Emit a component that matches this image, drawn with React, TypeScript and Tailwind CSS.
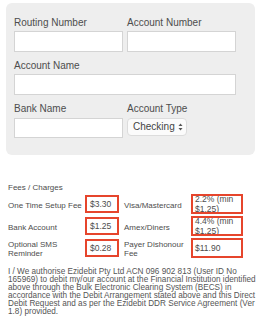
import React from "react";

const feeRows = [
  { label: "One Time Setup Fee", fee: "$3.30", label2: "Visa/Mastercard", fee2: "2.2% (min $1.25)" },
  { label: "Bank Account", fee: "$1.25", label2: "Amex/Diners", fee2: "4.4% (min $1.25)" },
  { label: "Optional SMS Reminder", fee: "$0.28", label2: "Payer Dishonour Fee", fee2: "$11.90" },
];

function Field({ label, className = "" }: { label: string; className?: string }) {
  return (
    <div className={className}>
      <div className="text-[10px] leading-[12px] text-[#4d4d4d]">{label}</div>
      <div className="mt-[2px] h-[21px] bg-white border border-[#d4d4d4]" />
    </div>
  );
}

export default function App() {
  return (
    <div className="w-[260px] h-[327px] bg-white overflow-hidden font-['Liberation_Sans',Arial,sans-serif]">
      <div className="pt-[3px] pl-[6px]">
        <div className="w-[249px] bg-[#eeeeee] rounded-[6px] pt-[14px] pb-[17px] pl-[8px]">
          <div className="w-[222px]">
            <div className="flex gap-[4px]">
              <Field label="Routing Number" className="w-[109px]" />
              <Field label="Account Number" className="w-[109px]" />
            </div>
            <Field label="Account Name" className="mt-[8px]" />
            <div className="mt-[8px] flex gap-[4px]">
              <div className="w-[109px]">
                <div className="text-[10px] leading-[12px] text-[#4d4d4d]">Bank Name</div>
                <div className="mt-[3px] h-[20px] bg-white border border-[#d4d4d4]" />
              </div>
              <div className="w-[109px]">
                <div className="text-[10px] leading-[12px] text-[#4d4d4d]">Account Type</div>
                <div className="mt-[3px] w-[60px] h-[18px] rounded-[4px] border border-[#dcdcdc] bg-[#fbfbfb] flex items-center pl-[5px] gap-[3px]">
                  <span className="text-[10px] leading-[12px] text-[#444]">Checking</span>
                  <svg width="5" height="8" viewBox="0 0 5 8" className="text-[#555] shrink-0">
                    <path d="M2.5 0.5 L4.5 3 L0.5 3 Z" fill="currentColor" />
                    <path d="M2.5 7.5 L4.5 5 L0.5 5 Z" fill="currentColor" />
                  </svg>
                </div>
              </div>
            </div>
          </div>
        </div>
      </div>

      <div className="pl-[8px] pr-[4px] text-[#4d4d4d]">
        <div className="mt-[28px] text-[8px] leading-[10px]">Fees / Charges</div>
        <div className="mt-[1px]">
          {feeRows.map((r) => (
            <div key={r.label} className="flex h-[22px] text-[8px] leading-[9px]">
              <div className="w-[77px] flex items-center">{r.label}</div>
              <div className="mt-[1px] w-[34px] h-[18px] border-2 border-[#e6452c] flex items-center px-[3px] text-[8.5px]">
                {r.fee}
              </div>
              <div className="w-[5px]" />
              <div className="w-[67px] flex items-center">{r.label2}</div>
              <div className="w-[52px] h-[20px] border-2 border-[#e6452c] overflow-hidden px-[2px] flex items-center leading-[10px] text-[8.5px]">
                <span className="block">{r.fee2}</span>
              </div>
            </div>
          ))}
        </div>
        <p className="mt-[8px] text-[8.2px] leading-[8px] text-[#555]">
          I / We authorise Ezidebit Pty Ltd ACN 096 902 813 (User ID No 165969) to debit my/our account at the
          Financial Institution identified above through the Bulk Electronic Clearing System (BECS) in accordance
          with the Debit Arrangement stated above and this Direct Debit Request and as per the Ezidebit DDR Service
          Agreement (Ver 1.8) provided.
        </p>
      </div>
    </div>
  );
}
